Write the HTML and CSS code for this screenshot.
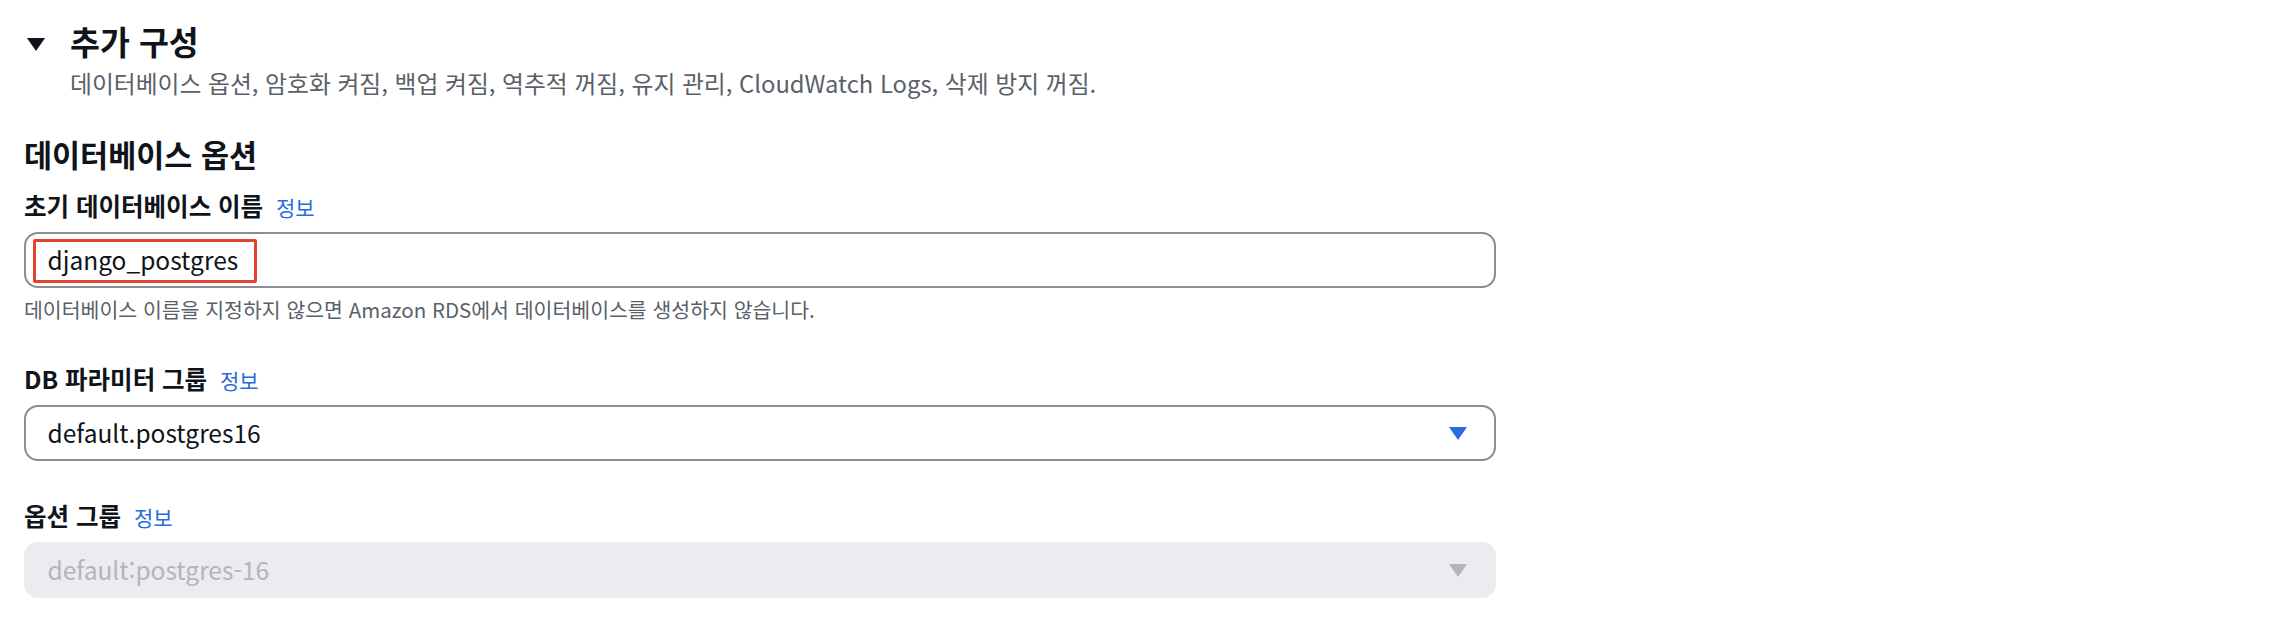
FILE: index.html
```html
<!DOCTYPE html>
<html lang="ko">
<head>
<meta charset="utf-8">
<title>추가 구성</title>
<link rel="stylesheet" href="styles.css">
</head>
<body>
<div class="page">
  <div class="exp-header">
    <span class="exp-icon">
      <svg viewBox="0 0 18 13" width="18" height="13"><path d="M0 0h18L9 13z" fill="#0f141a"/></svg>
    </span>
    <h2 class="exp-title">추가 구성</h2>
  </div>
  <p class="exp-desc">데이터베이스 옵션, 암호화 켜짐, 백업 켜짐, 역추적 꺼짐, 유지 관리, CloudWatch Logs, 삭제 방지 꺼짐.</p>

  <h3 class="section-title">데이터베이스 옵션</h3>

  <div class="field first">
    <div class="label">초기 데이터베이스 이름 <a class="info">정보</a></div>
    <div class="control input">
      <span class="value">django_postgres</span>
      <span class="highlight"></span>
    </div>
    <div class="helper">데이터베이스 이름을 지정하지 않으면 Amazon RDS에서 데이터베이스를 생성하지 않습니다.</div>
  </div>

  <div class="field">
    <div class="label">DB 파라미터 그룹 <a class="info">정보</a></div>
    <div class="control select">
      <span class="value">default.postgres16</span>
      <svg class="caret" viewBox="0 0 18 13" width="18" height="13"><path d="M0 0h18L9 13z" fill="#296cde"/></svg>
    </div>
  </div>

  <div class="field last">
    <div class="label">옵션 그룹 <a class="info">정보</a></div>
    <div class="control select disabled">
      <span class="value">default:postgres-16</span>
      <svg class="caret" viewBox="0 0 18 13" width="18" height="13"><path d="M0 0h18L9 13z" fill="#b4b4bb"/></svg>
    </div>
  </div>
</div>
</body>
</html>
```

FILE: styles.css
```css
* { box-sizing: border-box; }

html, body {
  margin: 0;
  padding: 0;
  background: #ffffff;
}

body {
  font-family: "Noto Sans CJK KR", "Noto Sans", "Liberation Sans", sans-serif;
  color: #0f141a;
}

.page {
  width: 1496px;
  padding-left: 24px;
  padding-top: 20px;
}

.exp-header {
  display: flex;
  align-items: center;
  height: 42px;
}

.exp-icon {
  width: 24px;
  height: 24px;
  display: flex;
  align-items: center;
  justify-content: center;
  margin-top: 6px;
  margin-right: 22px;
}

.exp-title {
  margin: 0;
  font-size: 32.5px;
  line-height: 42px;
  font-weight: 700;
}

.exp-desc {
  margin: 6px 0 0 46px;
  font-size: 23.8px;
  line-height: 30px;
  color: #5a5f69;
}

.section-title {
  margin: 37px 0 0 0;
  font-size: 30.5px;
  line-height: 38px;
  font-weight: 700;
}

.field {
  display: flex;
  flex-direction: column;
  margin-top: 40px;
}

.field.first {
  margin-top: 17px;
}

.field.last {
  margin-top: 39px;
}

.label {
  font-size: 24.5px;
  line-height: 32px;
  font-weight: 700;
  margin-bottom: 9px;
}

.info {
  margin-left: 6px;
  font-size: 21px;
  font-weight: 400;
  color: #296cde;
}

.control {
  position: relative;
  height: 56px;
  border: 2.5px solid #8c8c94;
  border-radius: 14px;
  display: flex;
  align-items: center;
  padding: 0 27px 0 21.5px;
  font-size: 24.5px;
}

.select {
  justify-content: space-between;
}

.value {
  line-height: 32px;
}

.disabled {
  background: #ebebf0;
  border-color: #ebebf0;
  color: #b4b4bb;
}

.highlight {
  position: absolute;
  left: 6.5px;
  top: 4.5px;
  width: 224px;
  height: 44px;
  border: 3px solid #e2432c;
  border-radius: 2px;
}

.helper {
  margin-top: 7px;
  font-size: 20.5px;
  line-height: 28px;
  color: #5a5f69;
}
```
